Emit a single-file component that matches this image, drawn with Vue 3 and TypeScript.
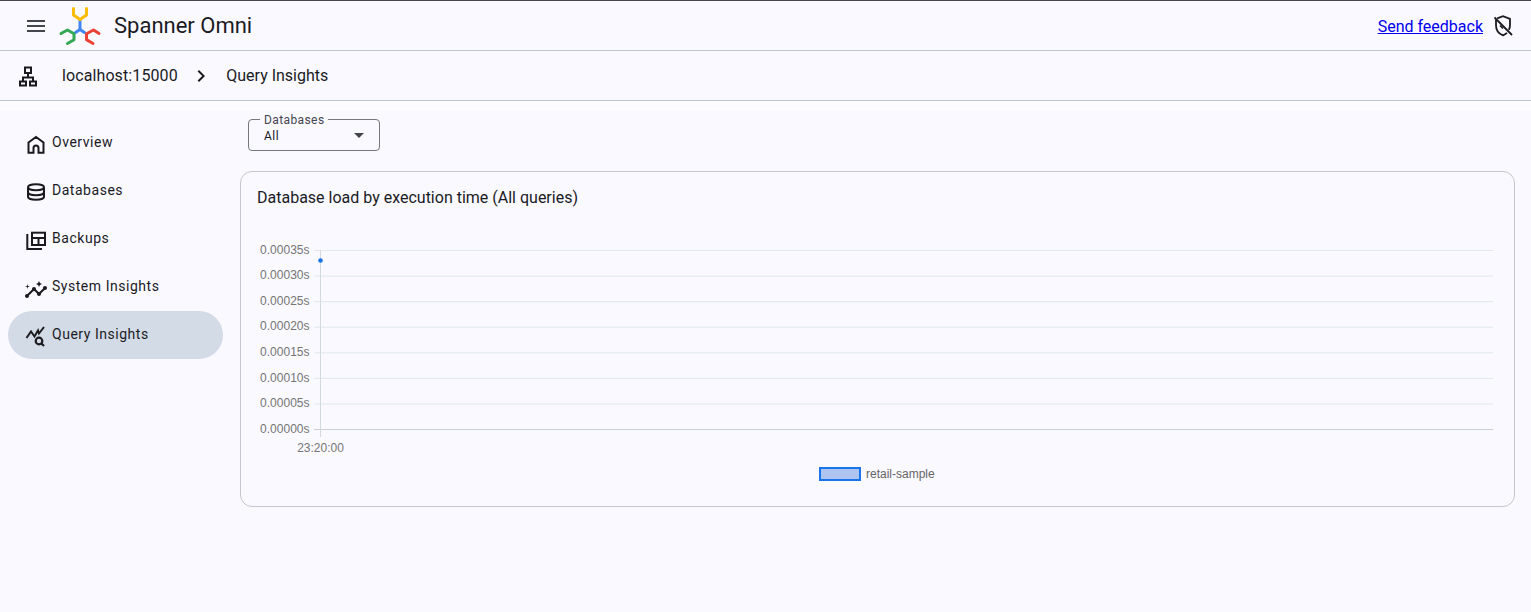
<script setup lang="ts">
interface NavItem { label: string; active?: boolean; icon: string }
const nav: NavItem[] = [
  { label: 'Overview', icon: 'home' },
  { label: 'Databases', icon: 'db' },
  { label: 'Backups', icon: 'backup' },
  { label: 'System Insights', icon: 'insights' },
  { label: 'Query Insights', icon: 'query', active: true },
]
const labels = ['0.00035s', '0.00030s', '0.00025s', '0.00020s', '0.00015s', '0.00010s', '0.00005s', '0.00000s']
const top = 250.5
const step = (429.5 - 250.5) / 7
const ticks = labels.map((label, i) => ({ label, y: top + step * i }))
</script>

<template>
  <div class="page">
    <header class="topbar">
      <div class="top-left">
        <svg class="menu" width="24" height="24" viewBox="0 0 24 24"><path d="M3 18h18v-2H3v2zm0-5h18v-2H3v2zm0-7v2h18V6H3z" fill="#44464f" /></svg>
        <svg class="logo" width="44" height="46" viewBox="0 0 44 46" fill="none" stroke-width="3" stroke-linejoin="round" stroke-linecap="round">
          <path d="M22 18v9.500M22 27.500l-4.500 3M22 27.500l4.500 3" stroke="#4285f4" />
          <path d="M15.500 6.500v6.500l6.500 4.500 6.500-4.500V6.500" stroke="#fbbc04" />
          <path d="M3 31.500l6.500-3.500 6.500 3.800v6l-6.500 3.700" stroke="#34a853" />
          <path d="M41 31.500l-5.500-3.500-7 3.800v5.800l6.500 3.900" stroke="#ea4335" />
        </svg>
        <span class="brand">Spanner Omni</span>
      </div>
      <div class="top-right">
        <a class="feedback" href="#">Send feedback</a>
        <svg width="24" height="24" viewBox="0 0 24 24" fill="none" stroke="#1b1b1f">
          <path d="M6.200 4.300L12 2.200l7 2.600v6.300c0 1.700-.4 3.300-1.100 4.800M16 18.900c-1.200 1.100-2.500 1.900-4 2.400-4-1.300-7-5-7-10V5.500" stroke-width="1.800" />
          <path d="M3.500 3.500l17.500 17.500" stroke-width="1.800" />
          <path d="M11.500 8.500v.1M9 11.500l3 3" stroke-width="1.600" />
        </svg>
      </div>
    </header>

    <div class="crumbs">
      <svg class="tree" width="24" height="24" viewBox="0 0 24 24" fill="none" stroke="#1b1b1f" stroke-width="2">
        <rect x="9" y="3.500" width="6" height="5.500" />
        <rect x="4" y="17.500" width="6" height="4" />
        <rect x="14" y="17.500" width="6" height="4" />
        <path d="M12 9v4.500M7 17.500v-4h10v4" />
      </svg>
      <span class="crumb host">localhost:15000</span>
      <svg class="chev" width="24" height="24" viewBox="0 0 24 24"><path d="M9 6l-1.400 1.400 4.600 4.600-4.600 4.600L9 18l6-6z" fill="#1b1b1f" /></svg>
      <span class="crumb">Query Insights</span>
    </div>

    <div class="body">
      <nav class="side">
        <a v-for="item in nav" :key="item.label" class="nav-item" :class="{ active: item.active }">
          <svg width="24" height="24" viewBox="0 0 24 24" fill="none" stroke="#1b1b1f" stroke-width="2">
            <path v-if="item.icon === 'home'" d="M4.500 21.800V11.500L12 6l7.500 5.500v10.300h-5V17a2.500 2.500 0 0 0-5 0v4.800z" />
            <g v-else-if="item.icon === 'db'">
              <ellipse cx="12" cy="8.200" rx="8" ry="3" />
              <path d="M4 8.200v9.600c0 1.700 3.600 3 8 3s8-1.300 8-3V8.200M4 13.200c0 1.700 3.600 3 8 3s8-1.300 8-3" />
            </g>
            <g v-else-if="item.icon === 'backup'">
              <rect x="8" y="5.700" width="13" height="12.300" />
              <path d="M3.300 7v15h14.700M8 11h13M14.500 11v7" />
            </g>
            <g v-else-if="item.icon === 'insights'" transform="translate(0 3)" stroke="none" fill="#1b1b1f">
              <path d="M21 8c-1.450 0-2.260 1.440-1.930 2.510l-3.550 3.560c-.3-.09-.74-.09-1.040 0l-2.550-2.550C12.270 10.450 11.460 9 10 9c-1.450 0-2.270 1.440-1.930 2.520l-4.560 4.550C2.440 15.740 1 16.550 1 18c0 1.100.9 2 2 2 1.450 0 2.260-1.440 1.930-2.510l4.550-4.560c.3.09.74.09 1.040 0l2.550 2.550C12.730 16.550 13.540 18 15 18c1.450 0 2.270-1.440 1.930-2.520l3.560-3.550c1.070.33 2.510-.48 2.510-1.930 0-1.100-.9-2-2-2z" />
              <path d="M15 9l.94-2.070L18 6l-2.060-.93L15 3l-.92 2.070L12 6l2.080.93zM3.500 11L4 9l2-.5L4 8l-.5-2L3 8l-2 .5L3 9z" />
            </g>
            <g v-else>
              <path d="M2.500 15l4.500-6.500 3.500 5 3.500-6 1 3 5-6.500" />
              <circle cx="15" cy="18" r="3.300" stroke-width="2.200" />
              <path d="M17.500 20.500l2.500 2.500" stroke-width="2.200" />
            </g>
          </svg>
          <span>{{ item.label }}</span>
        </a>
      </nav>

      <main class="main">
        <div class="select">
          <span class="select-label">Databases</span>
          <span class="select-value">All</span>
          <span class="caret"></span>
        </div>

        <section class="card">
          <h2 class="card-title">Database load by execution time (All queries)</h2>
          <svg class="chart" width="1273" height="300" viewBox="241 208 1273 300">
            <g v-for="t in ticks" :key="t.label">
              <line x1="314" :x2="1493" :y1="t.y" :y2="t.y" :stroke="t.label === '0.00000s' ? '#c9d0d9' : '#e1e9ec'" />
              <text x="309.500" :y="t.y" text-anchor="end" dominant-baseline="middle" class="tick">{{ t.label }}</text>
            </g>
            <line x1="320.500" x2="320.500" y1="250" y2="437" stroke="#d3dade" />
            <circle cx="320.500" cy="260.500" r="2.300" fill="#1a73e8" />
            <text x="320.500" y="452" text-anchor="middle" class="tick">23:20:00</text>
            <rect x="820" y="468" width="40" height="12" fill="#aec4f1" stroke="#1a73e8" stroke-width="2" />
            <text x="866" y="478" class="tick legend">retail-sample</text>
          </svg>
        </section>
      </main>
    </div>
  </div>
</template>

<style scoped>
.page {
  width: 1531px;
  height: 612px;
  background: #f9f9ff;
  font-family: Roboto, sans-serif;
  color: #1b1b1f;
  overflow: hidden;
  box-sizing: border-box;
  border-top: 1px solid #44464f;
}
.topbar {
  height: 49px;
  border-bottom: 1px solid #c0c6ce;
  display: flex;
  align-items: center;
  justify-content: space-between;
  padding: 0 16px 0 24px;
}
.top-left, .top-right {
  display: flex;
  align-items: center;
}
.logo {
  margin-left: 10px;
  margin-right: 12px;
  margin-top: -1px;
}
.brand {
  font-size: 22px;
  line-height: 28px;
}
.feedback {
  color: #0000ee;
  font-size: 16px;
  margin-right: 8px;
  padding-top: 2px;
  text-decoration: underline;
}
.crumbs {
  height: 49px;
  border-bottom: 1px solid #c0c6ce;
  display: flex;
  align-items: center;
  padding-left: 16px;
}
.tree { margin-right: 22px; }
.crumb { font-size: 16px; }
.host { letter-spacing: 0.1px; }
.chev { margin: 0 12.5px 0 12px; }
.body {
  display: flex;
  background: linear-gradient(#fdfdff 10px, #f9f9ff 10px);
}
.side {
  width: 215px;
  margin-left: 8px;
  margin-right: 17px;
  padding-top: 18px;
  display: flex;
  flex-direction: column;
}
.nav-item {
  height: 48px;
  border-radius: 24px;
  display: flex;
  align-items: center;
  gap: 4px;
  padding-left: 16px;
  font-size: 14px;
  letter-spacing: 0.53px;
  line-height: 20px;
}
.nav-item span { margin-top: -2px; }
.nav-item.active { background: #d3dbe7; }
.main {
  width: 1275px;
  padding-top: 18px;
}
.select {
  position: relative;
  width: 132px;
  height: 32px;
  margin-left: 8px;
  border: 1px solid #74777f;
  border-radius: 4px;
  box-sizing: border-box;
  display: flex;
  align-items: center;
  justify-content: space-between;
  padding: 0 15px 0 15px;
}
.select-label {
  position: absolute;
  top: -7px;
  left: 11px;
  padding: 0 4px;
  background: #f9f9ff;
  font-size: 12px;
  line-height: 14px;
  letter-spacing: 0.4px;
  color: #44464f;
}
.select-value {
  font-size: 12px;
  letter-spacing: 0.5px;
  margin-top: 1px;
}
.caret {
  width: 0;
  height: 0;
  border-left: 5px solid transparent;
  border-right: 5px solid transparent;
  border-top: 5px solid #44464f;
}
.card {
  margin-top: 20px;
  height: 336px;
  box-sizing: border-box;
  border: 1px solid #c4c6d0;
  border-radius: 12px;
  padding: 16px 0 0 16px;
}
.card-title {
  margin: 0;
  font-size: 16px;
  font-weight: 400;
  line-height: 20px;
  letter-spacing: 0;
}
.chart {
  display: block;
  margin-left: -16px;
}
.tick {
  font-family: "Liberation Sans", Arial, sans-serif;
  font-size: 12px;
  fill: #757575;
}
.legend { fill: #666; }
</style>

<style>
html, body { margin: 0; background: #f9f9ff; }
</style>
